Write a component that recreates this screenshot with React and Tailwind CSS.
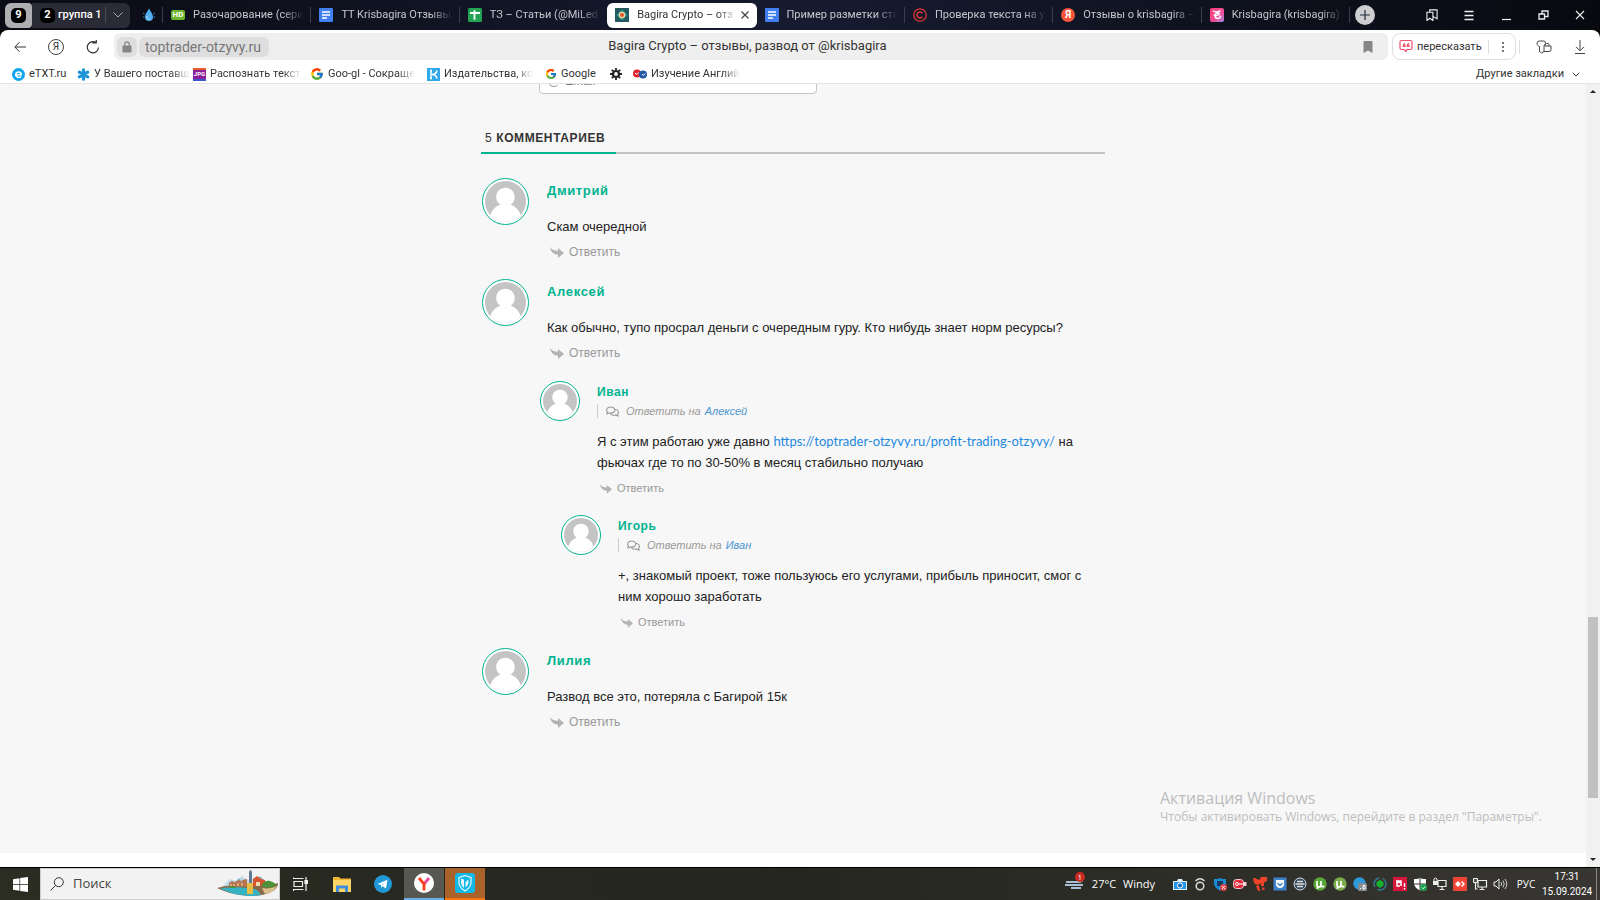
import React from 'react';
import { FcGoogle } from 'react-icons/fc';
import { FaRegComments, FaBookmark } from 'react-icons/fa';

const fade = '[mask-image:linear-gradient(to_right,#000_80%,transparent)]';

function DocIcon() {
  return (
    <svg viewBox="0 0 14 14" className="size-3.5 shrink-0">
      <rect width="14" height="14" rx="1" fill="#3f7ff0" />
      <path d="M3 4h8M3 7h8M3 10h5" stroke="#fff" strokeWidth="1.6" />
    </svg>
  );
}

function SheetIcon() {
  return (
    <svg viewBox="0 0 14 14" className="size-3.5 shrink-0">
      <rect width="14" height="14" rx="1.5" fill="#23a455" />
      <path d="M2 5h10M6.5 2.2v9.6" stroke="#fff" strokeWidth="1.8" />
    </svg>
  );
}

function HdIcon() {
  return <span className="flex h-2.5 w-3.5 shrink-0 items-center justify-center rounded-[2px] bg-[#6cb52d] text-[8px] leading-none font-bold text-white">HD</span>;
}

function BagiraIcon() {
  return (
    <svg viewBox="0 0 14 14" className="size-3.5 shrink-0">
      <rect width="14" height="14" fill="#245a5e" />
      <path d="M7 1.5 12.5 7 7 12.5 1.5 7z" fill="#2f9b93" />
      <circle cx="7" cy="7" r="3.2" fill="#f3d9a4" />
      <circle cx="7" cy="7" r="2" fill="#e2542b" />
    </svg>
  );
}

function CopyrightIcon() {
  return (
    <svg viewBox="0 0 14 14" className="size-3.5 shrink-0" fill="none" stroke="#d93a35" strokeWidth="1.3">
      <circle cx="7" cy="7" r="6.2" />
      <path d="M9.4 5.2A3 3 0 1 0 9.4 8.8" strokeWidth="1.6" />
    </svg>
  );
}

function YaTabIcon() {
  return <span className="flex size-3.5 shrink-0 items-center justify-center rounded-full bg-[#f8553a] text-[10px] leading-none font-bold text-white">Я</span>;
}

function KrisIcon() {
  return (
    <svg viewBox="0 0 14 14" className="size-3.5 shrink-0">
      <defs>
        <linearGradient id="kris" x1="0" y1="0" x2="1" y2="1">
          <stop offset="0" stopColor="#ff3f77" />
          <stop offset=".6" stopColor="#ee4c98" />
          <stop offset="1" stopColor="#9c8be0" />
        </linearGradient>
      </defs>
      <rect width="14" height="14" rx="2" fill="url(#kris)" />
      <path d="M3.500 3.200c1.500 1 4 .8 6.500-.2M4.200 7.300C6.500 7.800 9.500 7 9.300 5.600 9 4.600 6 4.800 5.200 7c-.6 2 .6 3.600 2.600 3.500 1.500-.1 2.500-1.100 2.700-2.300" fill="none" stroke="#fff" strokeWidth="1.500" strokeLinecap="round" />
    </svg>
  );
}

const tabs = [
  { title: 'Разочарование (сери', icon: HdIcon },
  { title: 'ТТ Krisbagira Отзывы', icon: DocIcon },
  { title: 'ТЗ – Статьи (@MiLed', icon: SheetIcon },
  { title: 'Bagira Crypto – отз', icon: BagiraIcon, active: true },
  { title: 'Пример разметки ста', icon: DocIcon },
  { title: 'Проверка текста на у', icon: CopyrightIcon },
  { title: 'Отзывы о krisbagira –', icon: YaTabIcon },
  { title: 'Krisbagira (krisbagira)', icon: KrisIcon },
];

function Tab({ title, icon: Icon, active }) {
  if (active) {
    return (
      <div className="flex h-[25px] min-w-0 flex-1 items-center rounded-md bg-white px-2 text-[#333]">
        <Icon />
        <span className={`ml-2 min-w-0 flex-1 overflow-hidden pt-px whitespace-nowrap ${fade}`}>{title}</span>
        <button aria-label="Закрыть вкладку" className="ml-1">
          <svg viewBox="0 0 8 8" className="size-2" stroke="#444" strokeWidth="1.2"><path d="M.5.5l7 7M7.500.5l-7 7" /></svg>
        </button>
      </div>
    );
  }
  return (
    <div className="flex h-[25px] min-w-0 flex-1 items-center pr-1.5 pl-2 text-[#c6c7cd]">
      <Icon />
      <span className={`ml-2 min-w-0 flex-1 overflow-hidden pt-px whitespace-nowrap ${fade}`}>{title}</span>
    </div>
  );
}

function Divider() {
  return <span className="h-4 w-px shrink-0 bg-[#3a3d4e]" />;
}

function TabBar() {
  return (
    <div className="flex h-[30px] items-center bg-linear-to-r from-[#0a0b14] via-[#161b30] to-[#080a10] text-[11px]">
      <button className="ml-[5px] flex h-[25px] w-[27px] items-center justify-center rounded-l-md rounded-r-sm bg-[#aeaeb2]">
        <span className="flex size-[15px] items-center justify-center rounded-[5px] bg-black font-bold text-white">9</span>
      </button>
      <div className="flex h-[25px] w-[98px] items-center rounded-r-md bg-[#2a2b36] text-white">
        <span className="ml-2 flex size-[15px] items-center justify-center rounded-[5px] bg-black font-bold">2</span>
        <span className="ml-[3px] flex-1 whitespace-nowrap font-medium">группа 1</span>
        <span className="h-4 w-px bg-[#484a56]" />
        <button aria-label="Свернуть группу" className="mx-[7px]">
          <svg viewBox="0 0 10 6" className="h-1.5 w-2.5" fill="none" stroke="#a6a7ae"><path d="M.5.5 5 5 9.500.5" /></svg>
        </button>
      </div>
      <button aria-label="Закреплённая вкладка" className="flex w-8 justify-center pl-1.5">
        <svg viewBox="0 0 14 14" className="size-3.5">
          <path d="M1 5l1.500 1M1 9h1.500M13 5l-1.500 1M13 9h-1.500" stroke="#3787c4" />
          <path d="M7 .5C8.500 3.500 11 6 11 9a4 4 0 0 1-8 0c0-3 2.500-5.500 4-8.500z" fill="#52aef0" />
          <path d="M5 8c0 2 1 3 2.500 3.200" stroke="#c4e7ff" fill="none" />
        </svg>
      </button>
      <div className="flex min-w-0 flex-1 items-center">
        {tabs.map((t, i) => (
          <React.Fragment key={t.title}>
            {!t.active && !(i > 0 && tabs[i - 1].active) && <Divider />}
            <Tab {...t} />
          </React.Fragment>
        ))}
        <Divider />
      </div>
      <button aria-label="Новая вкладка" className="ml-[5px] flex size-5 items-center justify-center rounded-full bg-[#cfcfd2]">
        <svg viewBox="0 0 10 10" className="size-2.5" stroke="#222a3f" strokeWidth="1.200"><path d="M5 0v10M0 5h10" /></svg>
      </button>
      <div className="mr-0.5 ml-[38px] flex w-[185px] items-center justify-around">
        <button aria-label="Коллекции">
          <svg viewBox="0 0 13 13" className="size-3" fill="none" stroke="#eee" strokeWidth="1.200"><path d="M1 3.500h6.500v9L4.200 10 1 12.500zM4 3.500V1h8v9.500L7.500 8" /></svg>
        </button>
        <button aria-label="Меню">
          <svg viewBox="0 0 12 12" className="size-3" stroke="#eee" strokeWidth="1.300"><path d="M1.500 2.500h9M1.500 6.500h9M1.500 10.500h9" /></svg>
        </button>
        <button aria-label="Свернуть">
          <svg viewBox="0 0 12 12" className="size-3" stroke="#eee" strokeWidth="1.200"><path d="M2 10.500h9" /></svg>
        </button>
        <button aria-label="Окно">
          <svg viewBox="0 0 12 12" className="size-3" fill="none" stroke="#eee" strokeWidth="1.300"><path d="M2 5h5.500v5H2zM5 5V2h6v5.500H7.500" /></svg>
        </button>
        <button aria-label="Закрыть">
          <svg viewBox="0 0 12 12" className="size-3" stroke="#eee" strokeWidth="1.100"><path d="M2 2l8 8M10 2l-8 8" /></svg>
        </button>
      </div>
    </div>
  );
}

function AddressBar() {
  return (
    <div className="bg-black">
      <div className="flex h-[33px] items-center rounded-t-lg bg-white text-sm">
        <button aria-label="Назад" className="ml-3.5">
          <svg viewBox="0 0 12 12" className="size-3" fill="none" stroke="#333"><path d="M12 6H1M5.500 1.200.8 6l4.700 4.800" /></svg>
        </button>
        <button aria-label="Яндекс" className="ml-[22px] flex size-4 items-center justify-center rounded-full border border-[#444] text-[10px] leading-none text-[#333]">Я</button>
        <button aria-label="Обновить" className="ml-[22px]">
          <svg viewBox="0 0 14 14" className="size-3.5" fill="none" stroke="#333" strokeWidth="1.200"><path d="M12.500 7.500A5.600 5.600 0 1 1 10 2.500M6.500 2.800h3.800V-.8" /></svg>
        </button>
        <div className="ml-3.5 flex h-[27px] min-w-0 flex-1 items-center rounded-md bg-[#efefef]">
          <button aria-label="Защищённое соединение" className="ml-[3px] flex h-5 w-5 items-center justify-center rounded-md bg-[#dedede]">
            <svg viewBox="0 0 10 12" className="h-3 w-2.5" fill="#858585"><rect x=".5" y="4.500" width="9" height="7" rx="1" /><path d="M2.800 5V3a2.200 2.200 0 0 1 4.400 0v2" fill="none" stroke="#858585" strokeWidth="1.200" /></svg>
          </button>
          <button className="ml-0.5 h-5 rounded-md bg-[#dedede] pr-2 pl-1.5 text-[#777]">toptrader-otzyvy.ru</button>
          <span className="flex-1 truncate pr-[136px] text-center text-[13px] text-[#333]">Bagira Crypto – отзывы, развод от @krisbagira</span>
          <button aria-label="В закладки" className="mr-3.5"><FaBookmark size={12} color="#868686" /></button>
        </div>
        <div className="ml-1 flex h-[27px] w-[124px] items-center rounded-lg border border-[#dedede] text-[11px] text-[#333]">
          <button className="ml-1.5 flex items-center gap-1 whitespace-nowrap">
            <svg viewBox="0 0 14 14" className="size-3.5" fill="none" stroke="#f0506a" strokeWidth="1.200">
              <path d="M2.500 1.500h9a1.500 1.500 0 0 1 1.500 1.500v6a1.500 1.500 0 0 1-1.500 1.500H8L7 12.500 5 10.500H2.500A1.500 1.500 0 0 1 1 9V3a1.500 1.500 0 0 1 1.500-1.500z" />
              <path d="M6 4.200c-1 .3-1.600 1-1.700 2v1.300H6V6.200H4.500M10 4.200c-1 .3-1.600 1-1.700 2v1.300H10V6.200H8.500" />
            </svg>
            пересказать
          </button>
          <span className="ml-1.5 h-3.5 w-px bg-[#ddd]" />
          <button aria-label="Ещё" className="ml-3">
            <svg viewBox="0 0 4 12" className="h-3 w-1" fill="#333"><circle cx="2" cy="2" r=".9" /><circle cx="2" cy="6" r=".9" /><circle cx="2" cy="10" r=".9" /></svg>
          </button>
        </div>
        <span className="ml-[3px] h-3.5 w-px bg-[#ddd]" />
        <button aria-label="Расширения" className="ml-4">
          <svg viewBox="0 0 16 16" className="size-4" fill="none" stroke="#444"><path d="M1 4.500Q1 2 3.500 2h4.500Q9.500 2 9.500 4.500L8 7v5.500L5.500 14 3.500 12.500V7.500C2 7 1 6 1 4.500zM9.500 6.500V5.500Q9.500 4.500 10.500 4.500h1.500Q13 4.500 13 5.500V7M8.500 7h6.500v3.500Q15 12.500 13 12.500H8" /></svg>
        </button>
        <button aria-label="Загрузки" className="mr-3.5 ml-[22px]">
          <svg viewBox="0 0 12 14" className="h-3.5 w-3" fill="none" stroke="#444"><path d="M6 0v10.500M2 6.800l4 4 4-4M1 13.500h10" /></svg>
        </button>
      </div>
    </div>
  );
}

const bookmarks = [
  {
    title: 'eTXT.ru',
    width: 'w-[54px]',
    icon: (
      <svg viewBox="0 0 13 13" className="size-[13px] shrink-0"><circle cx="6.500" cy="6.500" r="6.500" fill="#12a4f0" /><path d="M3.500 6.700h5.800C9.300 3 3.700 3 3.700 6.600c0 3 4 3.400 5.400 1.800" fill="none" stroke="#fff" strokeWidth="1.500" /></svg>
    ),
  },
  {
    title: 'У Вашего поставщ',
    width: 'w-[105px]',
    faded: true,
    icon: (
      <svg viewBox="0 0 13 13" className="size-[13px] shrink-0" stroke="#1d94d8" strokeWidth="3.200" strokeLinecap="round"><path d="M6.500 1.800v9.400M2.300 4.200l8.400 4.600M10.700 4.200 2.300 8.800" /></svg>
    ),
  },
  {
    title: 'Распознать текст',
    width: 'w-[106px]',
    faded: true,
    icon: <span className="flex size-[13px] shrink-0 items-center justify-center border-t-2 border-b-2 border-t-[#e8592b] border-b-[#3b57c9] bg-[#8d1f9b] text-[6px] leading-none font-bold text-white">JPG</span>,
  },
  { title: 'Goo-gl - Сокраще', width: 'w-[106px]', faded: true, icon: <FcGoogle size={14} className="shrink-0" /> },
  {
    title: 'Издательства, ко',
    width: 'w-[107px]',
    faded: true,
    icon: (
      <svg viewBox="0 0 13 13" className="size-[13px] shrink-0"><rect width="13" height="13" fill="#2fa9ea" /><path d="M3 2.500h2M3 10.500h2M4 2.500v8M10 2.500C9.500 5 8 6.500 5 6.500c3 0 4.500 1.500 5 4" stroke="#fff" strokeWidth="1.500" fill="none" /></svg>
    ),
  },
  { title: 'Google', width: 'w-[54px]', icon: <FcGoogle size={12} className="shrink-0" /> },
  {
    title: '',
    width: 'w-3',
    icon: (
      <svg viewBox="0 0 12 12" className="size-3 shrink-0" fill="none" stroke="#222"><circle cx="6" cy="6" r="3" strokeWidth="2.200" /><path d="M6 0v2M6 10v2M0 6h2M10 6h2M1.800 1.800l1.400 1.400M8.800 8.800l1.400 1.400M10.200 1.800 8.800 3.200M3.200 8.800l-1.400 1.400" strokeWidth="1.800" /></svg>
    ),
  },
  {
    title: 'Изучение Англий',
    width: 'w-[106px]',
    faded: true,
    icon: (
      <svg viewBox="0 0 14 10" className="h-2.5 w-3.5 shrink-0"><circle cx="4" cy="4.500" r="4" fill="#e3232d" /><circle cx="10" cy="5.500" r="4" fill="#2458a5" /><path d="M2 4l2 1.500 1.500-2M9 5l1.500 1.500 1.500-2" stroke="#fff" fill="none" /></svg>
    ),
  },
];

function BookmarksBar() {
  return (
    <nav className="flex h-[21px] items-center gap-[11px] border-b border-[#e4e4e4] bg-white pt-0.5 pr-5 pl-3 text-[11px] leading-4 text-[#333]">
      {bookmarks.map((b) => (
        <a key={b.title} href="#bookmark" aria-label={b.title || 'Настройки'} className={`flex shrink-0 items-center gap-1 ${b.width}`}>
          {b.icon}
          {b.title && <span className={`whitespace-nowrap ${b.faded ? fade : ''}`}>{b.title}</span>}
        </a>
      ))}
      <button className="ml-auto flex items-center gap-2 whitespace-nowrap">
        Другие закладки
        <svg viewBox="0 0 8 5" className="h-[5px] w-2" fill="none" stroke="#333"><path d="M.8.8 4 4 7.200.8" /></svg>
      </button>
    </nav>
  );
}

function Avatar({ small }) {
  return (
    <span className={`shrink-0 rounded-full border border-[#00b38f] bg-white p-0.5 ${small ? 'size-10' : 'size-[47px]'}`}>
      <svg viewBox="0 0 42 42" className="size-full rounded-full">
        <rect width="42" height="42" fill="#c4c4c4" />
        <path d="M21 7c5.500 0 9.500 4 9.500 9.500 0 3.500-1.700 6.200-4.300 7.800C32 26 35.500 30.500 37 36.500V42H5v-5.500c1.500-6 5-10.500 10.800-12.200-2.600-1.600-4.300-4.300-4.300-7.800C11.500 11 15.500 7 21 7z" fill="#fff" />
      </svg>
    </span>
  );
}

function ReplyArrow({ className }) {
  return (
    <svg viewBox="0 0 14 12" className={className} fill="#b3b3b3"><path d="M0 .8C1.500 3.800 4 4.700 8 4.700V2l6 5-6 5V8.700C3.500 8.500.5 5.500 0 .8z" /></svg>
  );
}

function Comment({ author, children }) {
  return (
    <article className="flex gap-[18px] pb-[18px]">
      <Avatar />
      <div className="min-w-0 flex-1">
        <h3 className="text-[13px] leading-[26px] font-bold tracking-wider text-[#00b38f]">{author}</h3>
        <p className="mt-3 text-[13px] leading-[21px] text-[#222]">{children}</p>
        <button className="mt-1.5 flex items-center gap-[5px] pl-[3px] text-xs leading-[18px] text-[#999]">
          <ReplyArrow className="h-3 w-3.5" />
          Ответить
        </button>
      </div>
    </article>
  );
}

function Reply({ author, replyTo, indent, children }) {
  return (
    <article className={`mt-px flex gap-[17px] pb-[17px] ${indent}`}>
      <Avatar small />
      <div className="min-w-0 flex-1">
        <h3 className="text-xs leading-[23px] font-bold tracking-wider text-[#00b38f]">{author}</h3>
        <div className="flex h-3.5 items-center border-l border-[#ccc] pl-2 text-[11px] leading-3.5 text-[#999] italic">
          <FaRegComments size={13} className="mr-[7px]" />
          Ответить на
          <a href="#comment" className="ml-1 text-[#4a96d2]">{replyTo}</a>
        </div>
        <p className="mt-[13px] text-[13px] leading-[21px] text-[#222]">{children}</p>
        <button className="mt-1.5 flex items-center gap-[5px] pl-[3px] text-[11px] leading-[18px] text-[#999]">
          <ReplyArrow className="h-[11px] w-3" />
          Ответить
        </button>
      </div>
    </article>
  );
}

function Page() {
  return (
    <main className="relative flex min-h-0 flex-1 flex-col overflow-hidden bg-white">
      <div className="flex-1 bg-[#f7f7f7]">
        <div className="mx-auto w-[624px] max-w-full">
          <label className="-mt-[22px] ml-[58px] flex h-8 w-[278px] items-center gap-[5px] rounded-sm border border-[#c4c4c4] bg-white pt-1.5 pl-2 text-xs text-[#999]">
            <span>@</span>
            <input type="email" placeholder="Email" className="min-w-0 flex-1 outline-none placeholder:text-[#777]" />
          </label>
          <div className="mt-[31px] flex border-b-2 border-[#c4c4c4]">
            <h2 className="-mb-0.5 w-[135px] border-b-2 border-[#00b38f] pl-1 text-xs leading-[27px] font-bold tracking-wider whitespace-nowrap text-[#333]">
              <span className="font-normal">5</span> КОММЕНТАРИЕВ
            </h2>
          </div>
          <section className="mt-6 pl-px">
            <Comment author="Дмитрий">Скам очередной</Comment>
            <Comment author="Алексей">Как обычно, тупо просрал деньги с очередным гуру. Кто нибудь знает норм ресурсы?</Comment>
            <Reply author="Иван" replyTo="Алексей" indent="ml-[58px]">
              Я с этим работаю уже давно <a href="#link" className="font-[Lato,sans-serif] text-[#1d88dd]">https://toptrader-otzyvy.ru/profit-trading-otzyvy/</a> на фьючах где то по 30-50% в месяц стабильно получаю
            </Reply>
            <Reply author="Игорь" replyTo="Иван" indent="ml-[79px]">
              +, знакомый проект, тоже пользуюсь его услугами, прибыль приносит, смог с ним хорошо заработать
            </Reply>
            <Comment author="Лилия">Развод все это, потеряла с Багирой 15к</Comment>
          </section>
        </div>
      </div>
      <div className="h-3.5" />
      <aside className="absolute right-[47px] bottom-[41px] w-[379px] font-['Open_Sans','Noto_Sans',sans-serif] text-[#bdbdbd]">
        <p className="text-base leading-5">Активация Windows</p>
        <p className="text-xs leading-[18px] whitespace-nowrap">Чтобы активировать Windows, перейдите в раздел "Параметры".</p>
      </aside>
    </main>
  );
}

function Scrollbar() {
  return (
    <div className="flex w-3.5 shrink-0 flex-col items-center bg-[#f1f1f1] py-1.5">
      <svg viewBox="0 0 6 3" className="h-[3px] w-1.5"><path d="M0 3 3 0l3 3z" fill="#222" /></svg>
      <span className="grow-[523]" />
      <span className="w-2.5 grow-[181] bg-[#c1c1c1]" />
      <span className="grow-[60]" />
      <svg viewBox="0 0 6 3" className="h-[3px] w-1.5"><path d="M0 0l3 3 3-3z" fill="#222" /></svg>
    </div>
  );
}

function SearchArt() {
  return (
    <svg viewBox="0 0 62 28" className="h-7 w-[62px]">
      <path d="M5 17 13 9l6 2 6-5 5 4 9-2 9 2 8 8z" fill="#c3dbe9" />
      <path d="M18 12l4-4 4 5zM38 11l5-5 6 6z" fill="#8fb4cd" />
      <path d="M0 18c8-3 20-3 30-2 14 0 26-1 31-3 .5 6-7 11-19 12.500C28 27 12 24 0 18z" fill="#8a6a48" />
      <path d="M3 18.500c8-1.500 20-1.500 28-.5 8 0 11 3 13 7-14 2.500-29-.5-41-6.500z" fill="#35b3c4" />
      <path d="M45 18c5 1 11 0 15-2-2 4-6 7-12 8z" fill="#d9c08c" />
      <path d="M12 16.500V13l3-2 3 1.500V12l4-2 3 2v-2l5-1v7.500z" fill="#b9744f" />
      <path d="M14 16v-2M17 16v-2M21 16v-3M25 16v-3" stroke="#f3dcb5" />
      <path d="M33.500 0l1.500 1.500V16h-3V1.500z" fill="#607a96" />
      <path d="M36 16V9l4-3 4 3 4 1v6z" fill="#d4552f" />
      <path d="M39 16v-4h4v4z" fill="#efd7b0" />
      <path d="M44 16c2-4 6-6 9-5 4 1 6 3 6 5-5 2-10 2-15 0z" fill="#4d9138" />
      <path d="M12 18c2-3 5-3 7 0z" fill="#4d9138" />
      <path d="M30 13h6v11h-6z" fill="#e8bb43" />
    </svg>
  );
}

const uT = <path d="M4 4v4q0 2 2 2 2 0 2-2V4v4q0 2 3.500 1.500M4.500 9v3" fill="none" stroke="#fff" strokeWidth="1.700" />;

const tray = [
  { name: 'Камера', art: <><path d="M0 4h4l1-2h4l1 2h4v9H0z" fill="#dff1ff" /><path d="M1 5h12v7H1z" fill="#2594ec" /><circle cx="7" cy="8.500" r="2.600" fill="#1671c4" stroke="#fff" /></> },
  { name: 'Сеть', art: <><circle cx="7" cy="9" r="3.800" fill="none" stroke="#ddd" strokeWidth="1.500" /><path d="M2.500 4Q7-.5 11.500 4" fill="none" stroke="#ddd" strokeWidth="1.300" /></> },
  { name: 'Защита', art: <><path d="M1 2q6 0 6-1.500Q7 2 13 2v5q-1 4-6 6.500Q2 11 1 7z" fill="#178bd6" /><path d="M4 4h6v5H4z" fill="#123a5c" /><circle cx="10.500" cy="10.500" r="3.500" fill="#e64545" /><path d="M9 9l3 3M12 9l-3 3" stroke="#fff" /></> },
  { name: 'Запись', art: <><rect x=".5" y="2.500" width="10" height="9" rx="3" fill="#e02a3a" stroke="#f5c9cc" /><path d="M11 7h2.500" stroke="#f5c9cc" strokeWidth="4" /><circle cx="4" cy="7" r="1.500" fill="none" stroke="#fff" /><path d="M6 7h6" stroke="#fff" /></> },
  { name: 'Уведомления', art: <><path d="M0 1h3l1 1.500h3L8 0h6v4l-3 1.500V9H8V6.500L4 8 1 6z" fill="#ee4427" /><path d="M3 9l3-1 1 6H5z" fill="#ee4427" /><path d="M9 10.500h2.500V13H9z" fill="#ee4427" /></> },
  { name: 'Почта', art: <><rect x=".5" y=".5" width="13" height="13" fill="#3e83cc" /><path d="M3 3h8v5q-1 3-4 3T3 8z" fill="#fff" /><path d="M4.500 6 7 8.500 9.500 6" fill="none" stroke="#3e83cc" strokeWidth="1.400" /></> },
  { name: 'Глобус', art: <><circle cx="7" cy="7" r="6" fill="#33495e" stroke="#ddd" /><path d="M4 4.500h6M2.500 7h9M4 9.500h6" fill="none" stroke="#ddd" strokeWidth="1.300" /></> },
  { name: 'uTorrent', art: <><circle cx="7" cy="7" r="6.700" fill="#58a635" />{uT}</> },
  { name: 'uTorrent Web', art: <><circle cx="7" cy="7" r="6.700" fill="#78ac4a" />{uT}</> },
  { name: 'Telegram', art: <><circle cx="6.500" cy="6.500" r="6.200" fill="#2c9ad8" /><rect x="5" y="6" width="9" height="8" rx="1.500" fill="#858b90" /><path d="M7 11.500h1M10 8.500h2v3.500h-2z" stroke="#fff" fill="none" /></> },
  { name: 'VPN', art: <><circle cx="7" cy="7" r="6" fill="none" stroke="#2d7f9e" strokeWidth="1.300" strokeDasharray="12 3" /><path d="M7 3l3.500 2v3.500L7 11 3.500 8.500V5z" fill="#18b32e" /></> },
  { name: 'AMD', art: <><rect width="14" height="14" fill="#d9153b" /><path d="M3 4h5v5M7.500 5.500H4V9h3M11.500 6v4M11.500 11v1.500" stroke="#fff" strokeWidth="1.500" fill="none" /></> },
  { name: 'Защитник Windows', art: <><path d="M1 2q5 0 6-1.500Q8 2 13 2v5q-1 4-6 6.500Q2 11 1 7z" fill="#fff" /><path d="M7 1v12M1 7h12" stroke="#333" /><circle cx="10.500" cy="10.500" r="3.500" fill="#17a34a" /><path d="M9 10.500l1.200 1.200 2-2.200" stroke="#fff" fill="none" /></> },
  { name: 'Блокировка', art: <><path d="M5 3.500h8v6H5zM9 9.500v3M6.500 12.500h5" stroke="#eee" fill="none" strokeWidth="1.200" /><rect x="0" y="4" width="5" height="4" fill="#eee" /><path d="M1 4V2q1.500-2 3 0v2" stroke="#eee" fill="none" /></> },
  { name: 'AnyDesk', art: <><rect width="14" height="14" fill="#ef4436" /><path d="M5 4l3 3-3 3-3-3z" fill="#fff" /><path d="M8.500 4.500 11 7 8.500 9.500" stroke="#fff" strokeWidth="1.500" fill="none" /></> },
  { name: 'Подключение', art: <><path d="M5 3.500h8.500v6.500H5zM9 10v2.500M6.500 12.500h5M2.500 6v6h2" stroke="#eee" fill="none" strokeWidth="1.200" /><path d="M.5 1.500h4v4h-4z" stroke="#eee" fill="#555" /></> },
  { name: 'Громкость', art: <><path d="M1 5h2l3-3v10L3 9H1z" stroke="#eee" fill="none" /><path d="M8 5q1.500 2 0 4M10 3.500q2.500 3.500 0 7M12 2q3.500 5 0 10" stroke="#ccc" fill="none" /></> },
];

function Taskbar() {
  return (
    <footer className="flex h-[33px] items-stretch border-t border-black bg-linear-to-r from-[#2b2d22] via-[#24261f] to-[#383632] font-['Open_Sans','Noto_Sans',sans-serif] text-[11px] text-white">
      <button aria-label="Пуск" className="flex w-10 items-center justify-center">
        <svg viewBox="0 0 15 15" className="size-[15px]" fill="#fff"><path d="M0 2.200 6.500 1.200V7H0zM7.200 1.100 15 0v7H7.200zM0 7.800h6.500v6L0 12.800zM7.200 7.800H15V15L7.200 13.900z" /></svg>
      </button>
      <label className="flex w-60 items-center border border-[#ccc] bg-[#f2f2f2] pl-[9px] text-[13px] text-[#444]">
        <svg viewBox="0 0 14 14" className="size-3.5 shrink-0" fill="none" stroke="#333"><circle cx="8.800" cy="5.200" r="4.500" /><path d="M5.600 8.400.5 13.500" /></svg>
        <input type="search" placeholder="Поиск" aria-label="Поиск" className="ml-[9px] min-w-0 flex-1 outline-none placeholder:text-[#444]" />
        <SearchArt />
      </label>
      <button aria-label="Представление задач" className="flex w-[41px] items-center justify-center">
        <svg viewBox="0 0 15 14" className="h-3.5 w-[15px]" fill="none" stroke="#eee" strokeWidth="1.200"><path d="M1 4.500h8.500v5H1zM.5 2V.5M.5 1.500h10M1 12.500h9.500M.5 12v2M13 0v14M13 3.500v3" /><path d="M12 3.500h2.500v3H12z" fill="#eee" /></svg>
      </button>
      <button aria-label="Проводник" className="flex w-[41px] items-center justify-center">
        <svg viewBox="0 0 18 15" className="h-[15px] w-[18px]"><path d="M0 0h6l1.500 1.500H18V15H0z" fill="#f0b634" /><path d="M0 3h18v12H0z" fill="#fdd468" /><path d="M3 15V8.500h12V15h-3v-3.500H6V15z" fill="#3d8ede" /></svg>
      </button>
      <button aria-label="Telegram" className="flex w-[42px] items-center justify-center">
        <svg viewBox="0 0 18 18" className="size-[18px]"><circle cx="9" cy="9" r="9" fill="#2199d8" /><path d="M3.500 9 13.500 4.800 12 13.500 8.800 11.200 7.400 12.800 7 10z" fill="#fff" /><path d="M7 10l4.500-3.200-3 3.500z" fill="#a9cfe6" /></svg>
      </button>
      <button aria-label="Яндекс Браузер" className="flex w-10 items-center justify-center border-b-2 border-[#6aaeea] bg-[#565851]">
        <svg viewBox="0 0 20 20" className="size-5"><circle cx="10" cy="10" r="10" fill="#fff" /><path d="M15 5l-5 6" stroke="#f04a9a" strokeWidth="2.800" /><path d="M5 5l5 6v6.500" fill="none" stroke="#fb3f1c" strokeWidth="2.800" /></svg>
      </button>
      <button aria-label="VPN клиент" className="ml-px flex w-10 items-center justify-center border-b-2 border-[#f5750e] bg-[#a8622a]">
        <svg viewBox="0 0 20 20" className="size-5"><rect width="20" height="20" rx="3" fill="#12b8e8" /><path d="M4 4.500 10 2.500l6 2v6Q15 15 10 18 5 15 4 10.500z" fill="none" stroke="#fff" strokeWidth="1.100" /><path d="M6 5.500l3 1V15Q6.500 13 6 10zM10.500 9l3-2.500V10q-.5 2.500-3 4.500z" fill="#e6f8fd" /></svg>
      </button>
      <div className="ml-auto flex items-center">
        <span className="relative mr-[7px]">
          <svg viewBox="0 0 20 12" className="h-3 w-5" fill="none" stroke="#a9bfd3" strokeWidth="1.800"><path d="M1 4h13q3 0 3-2.500M0 7h18M6 10h10" /></svg>
          <span className="absolute -top-1.5 right-0 flex size-2.5 items-center justify-center rounded-full bg-[#cc2a20] text-[8px] leading-none">1</span>
        </span>
        <span className="mr-[7px]">27°C</span>
        <span className="mr-[18px]">Windy</span>
        <div className="flex gap-1.5">
          {tray.map((t) => (
            <button key={t.name} aria-label={t.name}><svg viewBox="0 0 14 14" className="size-3.5 overflow-visible">{t.art}</svg></button>
          ))}
        </div>
        <button className="ml-[9px] w-5 text-[10px]">РУС</button>
        <time className="mr-1 ml-1.5 w-[50px] text-center font-[Roboto,sans-serif] text-[10px] leading-[15px] whitespace-nowrap">17:31<br />15.09.2024</time>
        <span className="h-full w-1 border-l border-[#888]" />
      </div>
    </footer>
  );
}

export default function App() {
  return (
    <div className="flex min-h-screen flex-col overflow-hidden bg-white font-['Liberation_Sans',Arial,sans-serif]">
      <header className="font-[Roboto,'Noto_Sans',sans-serif]">
        <TabBar />
        <AddressBar />
        <BookmarksBar />
      </header>
      <div className="flex flex-1 items-stretch">
        <Page />
        <Scrollbar />
      </div>
      <Taskbar />
    </div>
  );
}
